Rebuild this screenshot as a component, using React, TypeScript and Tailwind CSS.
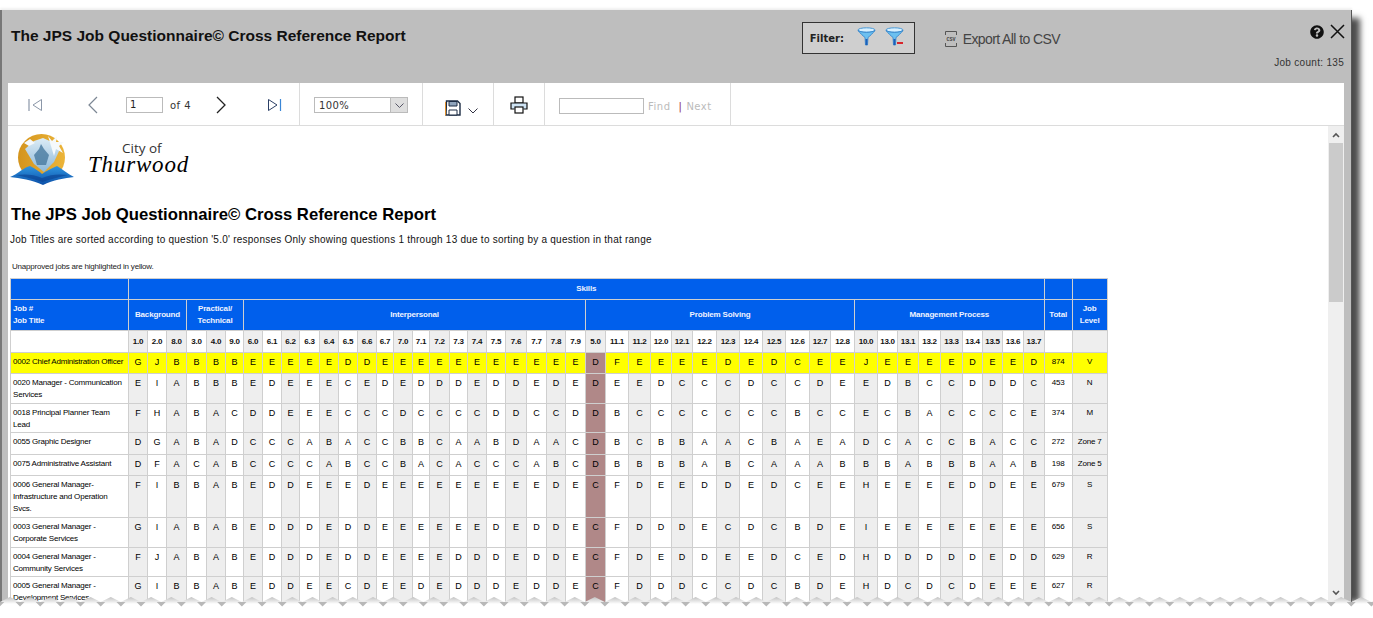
import { FaQuestionCircle } from "react-icons/fa";

// column edges read off the report grid
const edges = [128, 147, 166, 186, 206, 225, 243, 262, 281, 299, 319, 338, 357, 376, 393, 412, 429, 449, 467, 486, 505, 526, 546, 565, 585, 605, 628, 650, 671, 692, 716, 739, 762, 785, 809, 830, 854, 877, 897, 918, 940, 962, 982, 1002, 1023, 1043, 1071, 1106];
const questions = ["1.0", "2.0", "8.0", "3.0", "4.0", "9.0", "6.0", "6.1", "6.2", "6.3", "6.4", "6.5", "6.6", "6.7", "7.0", "7.1", "7.2", "7.3", "7.4", "7.5", "7.6", "7.7", "7.8", "7.9", "5.0", "11.1", "11.2", "12.0", "12.1", "12.2", "12.3", "12.4", "12.5", "12.6", "12.7", "12.8", "10.0", "13.0", "13.1", "13.2", "13.3", "13.4", "13.5", "13.6", "13.7"];

const rows = [
  { title: "0002 Chief Administration Officer", a: "GJBBBBEEEEEDDEEEEEEEEEEEDFEEEEDEDCEEJEEEEDEED", total: "874", level: "V", h: "h-[21px]", yellow: true },
  { title: "0020 Manager - Communication Services", a: "EIABBBEDEEECEDEDDDEDDEDEDEEDCCCDCCDEEDBCCDDDC", total: "453", level: "N", h: "h-[30px]" },
  { title: "0018 Principal Planner Team Lead", a: "FHABACDDEEECCCDCCCCDDCCDDBCCCCCCCBCCECBACCCCE", total: "374", level: "M", h: "h-[29px]" },
  { title: "0055 Graphic Designer", a: "DGABADCCCABACCBBCAABDAACDBCBBAACBAEADCACCBACC", total: "272", level: "Zone 7", h: "h-[22px]" },
  { title: "0075 Administrative Assistant", a: "DFACABCCCCABCCBACACCCABCDBBBBABCAAABBBABBBAAB", total: "198", level: "Zone 5", h: "h-[21px]" },
  { title: "0006 General Manager- Infrastructure and Operation Svcs.", a: "FIBBABEDDEEEDEEEEEEEEEDECFDEEDDEDCEEHEEEEDDEE", total: "679", level: "S", h: "h-[42px]" },
  { title: "0003 General Manager - Corporate Services", a: "GIABABEDDDEDDEEEEEEDEDDECFDDDECDCBDEIEEEEEEEE", total: "656", level: "S", h: "h-[30px]" },
  { title: "0004 General Manager - Community Services", a: "FJABABEDDDEDDEEEEDDDEDDECFDEDDEEDCEDHDDDDDEDD", total: "629", level: "R", h: "h-[29px]" },
  { title: "0005 General Manager - Development Services", a: "GIBBABEDDEECDEEDEDDDEDDECFDDDCCDCBDEHDCDCDEEE", total: "627", level: "R", h: "h-[30px]" },
];

const cell = "border border-[#cfcfcf] text-center align-top pt-[3px] px-0 leading-[12px]";
const small = "text-[8px] tracking-[-0.2px]";
const head = "border border-[#cfcfcf] bg-[#005fec] text-[#eef2ff] font-bold text-center align-middle leading-[12px] text-[8px] tracking-[-0.15px]";

function Logo() {
  return (
    <svg width="65" height="52" viewBox="0 0 65 52" className="shrink-0">
      <defs>
        <linearGradient id="sun" x1="0" y1="0" x2="1" y2="0">
          <stop offset="0" stopColor="#d4941c" />
          <stop offset="1" stopColor="#ecb53a" />
        </linearGradient>
        <linearGradient id="fan" x1="0" y1="0" x2="0" y2="1">
          <stop offset="0" stopColor="#dcecf6" />
          <stop offset="1" stopColor="#8db8d8" />
        </linearGradient>
        <linearGradient id="book" x1="0" y1="0" x2="0" y2="1">
          <stop offset="0" stopColor="#2f95e0" />
          <stop offset="1" stopColor="#0b4fa8" />
        </linearGradient>
      </defs>
      <circle cx="31.5" cy="23.5" r="23.5" fill="url(#sun)" />
      <path d="M15 15 L24 7 L33 4 L42 8 L50 15 L44 28 L34 38 L24 30 Z" fill="url(#fan)" />
      <path d="M38 2 L42 7 L47 2 L46 8 L54 8 L49 12 L53 19 L46 15 L44 22 L41 12 Z M14 9 L20 5 L25 9 L19 12 Z" fill="#f5f9fc" />
      <path d="M31 10 L34 15 L39 21 L36 31 L27 31 L24 21 L29 15 Z" fill="#47799f" opacity="0.8" />
      <path d="M0 43 C8 40 14 33 20 32 C26 35 30 38 32 40 C36 37 42 34 47 32 C52 35 58 40 64 43 C55 44 43 46 33 51 C22 46 10 44 0 43 Z" fill="url(#book)" />
      <path d="M6 41 C14 40 24 40 32 44 C41 40 50 40 58 41 C50 43 40 45 32.5 48 C25 45 14 43 6 41 Z" fill="#0a3f90" opacity="0.6" />
    </svg>
  );
}

function Funnel({ minus }: { minus?: boolean }) {
  return (
    <svg width="19" height="20" viewBox="0 0 19 20">
      <ellipse cx="9.5" cy="3" rx="8.5" ry="2.2" fill="#d8f0ff" stroke="#4a9ad8" />
      <path d="M1 3.5 C3 6 6 9 8 10.5 L8.5 18 L10.5 18 L11 10.5 C13 9 16 6 18 3.5 C14 6 5 6 1 3.5 Z" fill="#6cc0f0" stroke="#2f7fc8" strokeWidth="0.8" />
      <path d="M8.5 12 L8.7 18 L10.3 18 L10.5 12 Z" fill="#1f5fb8" />
      {minus && <rect x="12" y="15" width="6" height="2" fill="#d8262c" />}
    </svg>
  );
}

function TornEdge() {
  const step = 20.17;
  const count = 69;
  let top = "M0 606 L0 600";
  let teeth = "";
  for (let k = -1; k < count; k++) {
    const v = 20 + step * k;
    top += ` L${v.toFixed(1)} 602 L${(v + step / 2).toFixed(1)} 597`;
    teeth += `M${(v - 4.5).toFixed(1)} 602 L${(v + 4.5).toFixed(1)} 602 L${v.toFixed(1)} 606.5 Z `;
  }
  top += " L1373 602 L1373 606 Z";
  return (
    <svg width="1373" height="618" viewBox="0 0 1373 618" className="absolute left-0 top-0 pointer-events-none">
      <defs>
        <linearGradient id="tear" x1="0" y1="597" x2="0" y2="604" gradientUnits="userSpaceOnUse">
          <stop offset="0" stopColor="#c2c2c2" />
          <stop offset="1" stopColor="#ffffff" />
        </linearGradient>
      </defs>
      <path d={top} fill="url(#tear)" />
      <rect x="0" y="605" width="1373" height="13" fill="#ffffff" />
      <path d={teeth} fill="#b8b8b8" />
    </svg>
  );
}

export default function App() {
  return (
    <div className="relative w-[1373px] h-[618px] overflow-hidden bg-white font-['Liberation_Sans',Arial,sans-serif]">
      <div className="pt-[10px]">
        <div className="w-[1352px] h-[600px] flex flex-col bg-[#bebebe] border-l-2 border-r border-l-[#777] border-r-[#555] shadow-[16px_0_6px_-8px_rgba(0,0,0,0.7),0_-2px_2px_rgba(0,0,0,0.06)]">
          {/* title bar */}
          <div className="h-[73px] flex items-start shrink-0">
            <h1 className="ml-[9px] mt-[16px] text-[15.5px] leading-[19px] font-bold text-[#111]">
              The JPS Job Questionnaire© Cross Reference Report
            </h1>
            <div className="ml-[396px] mt-[12px] w-[113px] h-[32px] flex items-center border border-[#333] bg-[#cfcfcf] pl-[7px]">
              <span className="text-[10px] font-bold text-[#222] font-['DejaVu_Sans',sans-serif]">Filter:</span>
              <span className="ml-[13px] mb-[2px] flex gap-[9px]">
                <Funnel />
                <Funnel minus />
              </span>
            </div>
            <div className="ml-[30px] mt-[21px] flex items-center gap-[6px] text-[#444]">
              <svg width="12" height="16" viewBox="0 0 12 16">
                <path d="M0.5 4 L0.5 0.5 L11.5 0.5 L11.5 4 M0.5 12 L0.5 15.5 L11.5 15.5 L11.5 12" fill="none" stroke="#555" />
                <text x="6" y="10" textAnchor="middle" fontSize="5" fontWeight="700" fill="#444" fontFamily="Liberation Mono">CSV</text>
              </svg>
              <span className="text-[14px] leading-[16px] tracking-[-0.6px]">Export All to CSV</span>
            </div>
            <div className="ml-auto mr-[6px] mt-[14px] flex flex-col items-end">
              <div className="flex items-center gap-[6px] h-[15px]">
                <FaQuestionCircle className="w-[14px] h-[14px] text-[#111]" />
                <svg width="15" height="15" viewBox="0 0 15 15">
                  <path d="M1 1 L14 14 M14 1 L1 14" stroke="#111" strokeWidth="1.5" />
                </svg>
              </div>
              <span className="mt-[18px] mr-[1px] text-[10px] leading-[12px] tracking-[0.3px] text-[#333]">Job count: 135</span>
            </div>
          </div>

          <div className="flex-1 min-h-0 ml-[6px] mr-[7px] flex flex-col bg-white">
            {/* report toolbar */}
            <div className="h-[43px] shrink-0 flex border-b border-[#dcdcdc] font-['DejaVu_Sans',sans-serif] text-[10px] text-[#333]">
              <div className="w-[292px] flex items-center border-r border-[#dcdcdc] pl-[20px] pt-[2px]">
                <svg width="15" height="14" viewBox="0 0 15 14">
                  <path d="M1 1 V13" stroke="#8b97a8" strokeWidth="1.2" />
                  <path d="M13.5 1.5 L5 7 L13.5 12.5 Z" fill="none" stroke="#8b97a8" />
                </svg>
                <svg width="11" height="18" viewBox="0 0 11 18" className="ml-[44px]">
                  <path d="M10 1 L2 9 L10 17" fill="none" stroke="#7c8794" strokeWidth="1.2" />
                </svg>
                <div className="ml-[28px] w-[37px] h-[16px] border border-[#bbb] pl-[3px] leading-[13px] text-[#222]">1</div>
                <span className="ml-[7px] tracking-[0.5px]">of 4</span>
                <svg width="11" height="18" viewBox="0 0 11 18" className="ml-[25px]">
                  <path d="M1 1 L9 9 L1 17" fill="none" stroke="#222" strokeWidth="1.3" />
                </svg>
                <svg width="15" height="14" viewBox="0 0 15 14" className="ml-[40px]">
                  <path d="M1.5 1.5 L10 7 L1.5 12.5 Z" fill="none" stroke="#2b3f66" />
                  <path d="M13.5 1 V13" stroke="#3a86d6" strokeWidth="1.2" />
                </svg>
              </div>
              <div className="w-[123px] flex items-center border-r border-[#dcdcdc] pl-[14px] pt-[2px]">
                <div className="w-[94px] h-[16px] flex border border-[#bbb]">
                  <span className="flex-1 pl-[4px] leading-[15px] tracking-[0.4px]">100%</span>
                  <span className="w-[17px] flex items-center justify-center bg-[#dedede] border-l border-[#bbb]">
                    <svg width="9" height="5" viewBox="0 0 9 5">
                      <path d="M0.5 0.5 L4.5 4.5 L8.5 0.5" fill="none" stroke="#556" />
                    </svg>
                  </span>
                </div>
              </div>
              <div className="w-[71px] flex items-start border-r border-[#dcdcdc] pl-[22px] pt-[17px]">
                <svg width="16" height="16" viewBox="0 0 16 16">
                  <path d="M1.5 1 H12.5 L15 3.5 V15 H1 Z" fill="#fff" stroke="#1c2c44" strokeWidth="1.4" />
                  <path d="M4 1.5 H12 V6 H4 Z" fill="#8fa4bc" stroke="#1c2c44" />
                  <path d="M4 10 H12 V15 H4 Z" fill="#fff" stroke="#1c2c44" />
                  <path d="M0.5 2 V15.5" stroke="#e0902c" />
                </svg>
                <svg width="10" height="6" viewBox="0 0 10 6" className="ml-[7px] mt-[8px]">
                  <path d="M0.5 0.5 L5 5 L9.5 0.5" fill="none" stroke="#334" />
                </svg>
              </div>
              <div className="w-[51px] flex items-start border-r border-[#dcdcdc] pl-[16px] pt-[13px]">
                <svg width="18" height="18" viewBox="0 0 18 18">
                  <rect x="5" y="1" width="8" height="6" fill="#fff" stroke="#111" strokeWidth="1.2" />
                  <path d="M4.5 13 H1 V7 H17 V13 H13.5" fill="#cfe4f4" stroke="#111" strokeWidth="1.2" />
                  <rect x="5" y="11" width="8" height="6" fill="#fff" stroke="#111" strokeWidth="1.2" />
                </svg>
              </div>
              <div className="w-[186px] flex items-center border-r border-[#dcdcdc] pl-[14px] pt-[3px] text-[10px] text-[#bbb] tracking-[0.5px]">
                <div className="w-[85px] h-[16px] border border-[#bbb]" />
                <span className="ml-[4px] mt-[1px]">Find</span>
                <span className="ml-[8px] mt-[1px] text-[#8a2a5a]">|</span>
                <span className="ml-[4px] mt-[1px]">Next</span>
              </div>
            </div>

            {/* report body */}
            <div className="flex-1 min-h-0 flex overflow-hidden">
              <div className="flex-1 min-w-0 pl-[2px]">
                <div className="flex items-start h-[52px] mt-[8px]">
                  <Logo />
                  <div className="ml-[13px] w-[105px] text-[#222]">
                    <div className="ml-[34px] mt-[7px] text-[13.5px] leading-[14px] font-['Open_Sans',sans-serif] text-[#333]">City of</div>
                    <div className="text-[23px] leading-[20px] italic font-['Liberation_Serif',serif] tracking-[0.8px] text-black">Thurwood</div>
                  </div>
                </div>
                <h2 className="mt-[19px] ml-[1px] text-[16.7px] leading-[20px] font-bold text-black">
                  The JPS Job Questionnaire© Cross Reference Report
                </h2>
                <p className="mt-[9px] text-[10px] leading-[12px] tracking-[0.24px] text-[#111]">
                  Job Titles are sorted according to question '5.0' responses Only showing questions 1 through 13 due to sorting by a question in that range
                </p>
                <p className="mt-[16px] ml-[2px] text-[8px] leading-[10px] tracking-[-0.2px] text-[#222]">Unapproved jobs are highlighted in yellow.</p>

                <table className="mt-[6px] table-fixed border-collapse text-[9px] text-black w-[1096px]">
                  <colgroup>
                    <col style={{ width: 118 }} />
                    {edges.slice(1).map((e, i) => (
                      <col key={e} style={{ width: e - edges[i] }} />
                    ))}
                  </colgroup>
                  <thead>
                    <tr className="h-[21px]">
                      <th className={head} />
                      <th className={head} colSpan={45}>Skills</th>
                      <th className={head} />
                      <th className={head} />
                    </tr>
                    <tr className="h-[31px]">
                      <th className={`${head} !text-left pl-[2px]`}>Job #<br />Job Title</th>
                      <th className={head} colSpan={3}>Background</th>
                      <th className={head} colSpan={3}>Practical/<br />Technical</th>
                      <th className={head} colSpan={18}>Interpersonal</th>
                      <th className={head} colSpan={12}>Problem Solving</th>
                      <th className={head} colSpan={9}>Management Process</th>
                      <th className={head}>Total</th>
                      <th className={head}>Job<br />Level</th>
                    </tr>
                    <tr className="h-[22px]">
                      <th className="border border-[#cfcfcf]" />
                      {questions.map((q, i) => (
                        <th key={q} className={`border border-[#cfcfcf] text-center align-middle text-[8px] tracking-[-0.25px] font-bold text-[#111] ${i % 2 === 0 ? "bg-[#eeeeee]" : "bg-white"}`}>{q}</th>
                      ))}
                      <th className="border border-[#cfcfcf]" />
                      <th className="border border-[#cfcfcf] bg-[#eeeeee]" />
                    </tr>
                  </thead>
                  <tbody>
                    {rows.map((r) => (
                      <tr key={r.title} className={`${r.h} ${r.yellow ? "bg-[#ffff00]" : ""}`}>
                        <td className={`border border-[#cfcfcf] align-top pt-[3px] pl-[2px] pr-[1px] leading-[12px] ${small}`}>{r.title}</td>
                        {r.a.split("").map((c, i) => {
                          let bg = "";
                          if (i === 24) bg = "bg-[#b08888]";
                          else if (!r.yellow && i % 2 === 0) bg = "bg-[#eeeeee]";
                          return <td key={i} className={`${cell} ${bg}`}>{c}</td>;
                        })}
                        <td className={`${cell} ${small}`}>{r.total}</td>
                        <td className={`${cell} ${small} ${r.yellow ? "" : "bg-[#eeeeee]"}`}>{r.level}</td>
                      </tr>
                    ))}
                  </tbody>
                </table>
              </div>

              {/* scrollbar */}
              <div className="w-[16px] shrink-0 flex flex-col items-center bg-[#efefef]">
                <div className="h-[17px] flex items-center justify-center">
                  <svg width="8" height="6" viewBox="0 0 8 6">
                    <path d="M1 5 L4 2 L7 5" fill="none" stroke="#555" strokeWidth="1.6" />
                  </svg>
                </div>
                <div className="w-[14px] h-[159px] bg-[#cbcbcb]" />
                <div className="flex-1" />
                <div className="h-[20px] flex items-start justify-center">
                  <svg width="8" height="6" viewBox="0 0 8 6">
                    <path d="M1 1 L4 4 L7 1" fill="none" stroke="#555" strokeWidth="1.6" />
                  </svg>
                </div>
              </div>
            </div>
          </div>
        </div>
      </div>
      <TornEdge />
    </div>
  );
}
